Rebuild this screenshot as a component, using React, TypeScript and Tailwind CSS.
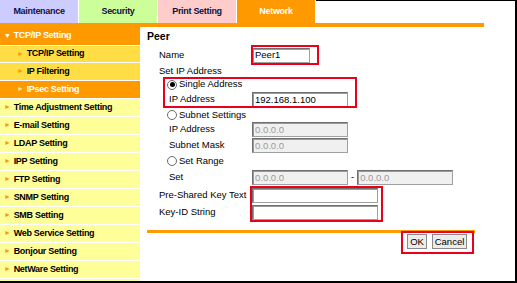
import React from 'react';

const tabs = [
  { label: 'Maintenance', cls: 'bg-[#ccccff] text-[#101040]' },
  { label: 'Security', cls: 'bg-[#ccff99] text-[#101040]' },
  { label: 'Print Setting', cls: 'bg-[#ffcccc] text-[#101040]' },
  { label: 'Network', cls: 'bg-[#ff9900] text-white' },
];

const menu = [
  'Time Adjustment Setting',
  'E-mail Setting',
  'LDAP Setting',
  'IPP Setting',
  'FTP Setting',
  'SNMP Setting',
  'SMB Setting',
  'Web Service Setting',
  'Bonjour Setting',
  'NetWare Setting',
];

function Field({ w, value = '', disabled = false }: { w: string; value?: string; disabled?: boolean }) {
  return (
    <div
      className={`${w} h-[15px] border border-t-[#6f6f6f] border-l-[#6f6f6f] border-r-[#a0a0a0] border-b-[#a0a0a0] shadow-[inset_1px_1px_0_#9a9a9a] flex items-center px-[2px] text-[9.5px] leading-none ${
        disabled ? 'bg-[#f0f0f0] text-[#9a9a9a]' : 'bg-white text-black'
      }`}
    >
      {value}
    </div>
  );
}

function Radio({ on }: { on?: boolean }) {
  return (
    <span className="w-[10px] h-[10px] rounded-full border border-[#6a6a6a] bg-white flex items-center justify-center mr-[2px]">
      {on && <span className="w-[5px] h-[5px] rounded-full bg-black" />}
    </span>
  );
}

function Row({ label, indent, h, children }: { label: string; indent: string; h: string; children?: React.ReactNode }) {
  return (
    <div className={`flex items-center ${h}`}>
      <div className={`${indent} w-[105px] shrink-0 whitespace-nowrap`}>{label}</div>
      {children}
    </div>
  );
}

export default function App() {
  return (
    <div
      className="w-[517px] h-[283px] bg-white border-r-2 border-b-2 border-black flex flex-col overflow-hidden text-black"
      style={{ fontFamily: '"Liberation Sans", Arial, sans-serif' }}
    >
      <div className="flex h-[23px] shrink-0">
        {tabs.map(t => (
          <div
            key={t.label}
            className={`w-[78px] mr-px flex items-center justify-center text-[9px] tracking-[-0.3px] font-bold ${t.cls}`}
          >
            {t.label}
          </div>
        ))}
        <div className="flex-1 border-t border-black" />
      </div>
      <div className="h-[4px] w-[484px] bg-[#ff9900] shrink-0" />

      <div className="flex flex-1 min-h-0">
        <div className="w-[140px] shrink-0 flex flex-col text-[9px] tracking-[-0.3px] font-bold">
          <div className="h-[19px] bg-[#ff9900] text-white flex items-center pl-[4px] border-b border-white">
            <span className="text-[7px] mr-[3px]">▼</span>TCP/IP Setting
          </div>
          <div className="h-[17px] bg-[#ffdd44] flex items-center pl-[17px] border-b border-white">
            <span className="text-[7px] text-[#ff9900] mr-[3px]">►</span>TCP/IP Setting
          </div>
          <div className="h-[18px] bg-[#ffdd44] flex items-center pl-[17px] border-b border-white">
            <span className="text-[7px] text-[#ff9900] mr-[3px]">►</span>IP Filtering
          </div>
          <div className="h-[18px] bg-[#ff9900] text-white flex items-center pl-[17px] border-b border-white">
            <span className="text-[7px] text-[#ffee99] mr-[3px]">►</span>IPsec Setting
          </div>
          {menu.map(m => (
            <div key={m} className="h-[18px] bg-[#ffff99] flex items-center pl-[4px] border-b border-white">
              <span className="text-[7px] text-[#ff9900] mr-[3px]">►</span>
              {m}
            </div>
          ))}
          <div className="flex-1 bg-[#ffff99]" />
        </div>

        <div className="relative flex-1 pl-[7px] text-[9.5px]">
          <div className="h-[19px] flex items-end pb-[1px] text-[10.5px] font-bold">Peer</div>
          <Row label="Name" indent="pl-[12px]" h="h-[18px]">
            <Field w="w-[58px]" value="Peer1" />
          </Row>
          <div className="h-[14px] flex items-center pl-[12px]">Set IP Address</div>
          <div className="h-[13px] flex items-center pl-[20px]">
            <Radio on />Single Address
          </div>
          <Row label="IP Address" indent="pl-[22px]" h="h-[17px]">
            <Field w="w-[96px]" value="192.168.1.100" />
          </Row>
          <div className="h-[14px] flex items-center pl-[20px]">
            <Radio />Subnet Settings
          </div>
          <Row label="IP Address" indent="pl-[22px]" h="h-[15px]">
            <Field w="w-[96px]" value="0.0.0.0" disabled />
          </Row>
          <Row label="Subnet Mask" indent="pl-[22px]" h="h-[17px]">
            <Field w="w-[96px]" value="0.0.0.0" disabled />
          </Row>
          <div className="h-[14px] flex items-center pl-[20px]">
            <Radio />Set Range
          </div>
          <Row label="Set" indent="pl-[22px]" h="h-[19px]">
            <Field w="w-[96px]" value="0.0.0.0" disabled />
            <span className="mx-[3px]">-</span>
            <Field w="w-[96px]" value="0.0.0.0" disabled />
          </Row>
          <Row label="Pre-Shared Key Text" indent="pl-[12px]" h="h-[17px]">
            <Field w="w-[126px]" />
          </Row>
          <Row label="Key-ID String" indent="pl-[12px]" h="h-[16px]">
            <Field w="w-[126px]" />
          </Row>
          <div className="mt-[10px] h-[3px] w-[328px] bg-[#ff9900]" />
          <div className="w-[328px] flex justify-end gap-[5px] pt-[1px] pr-[8px]">
            <button className="h-[15px] w-[20px] bg-[#ececec] border border-[#8a8a8a] text-[9.5px] leading-none">OK</button>
            <button className="h-[15px] w-[35px] bg-[#ececec] border border-[#8a8a8a] text-[9.5px] leading-none">Cancel</button>
          </div>

          <div className="absolute left-[111px] top-[18px] w-[68px] h-[20px] border-2 border-[#e8001c]" />
          <div className="absolute left-[23px] top-[50px] w-[194px] h-[31px] border-2 border-[#e8001c]" />
          <div className="absolute left-[110px] top-[159px] w-[133px] h-[36px] border-2 border-[#e8001c]" />
          <div className="absolute left-[261px] top-[204px] w-[73px] h-[23px] border-2 border-[#e8001c]" />
        </div>
      </div>
    </div>
  );
}
